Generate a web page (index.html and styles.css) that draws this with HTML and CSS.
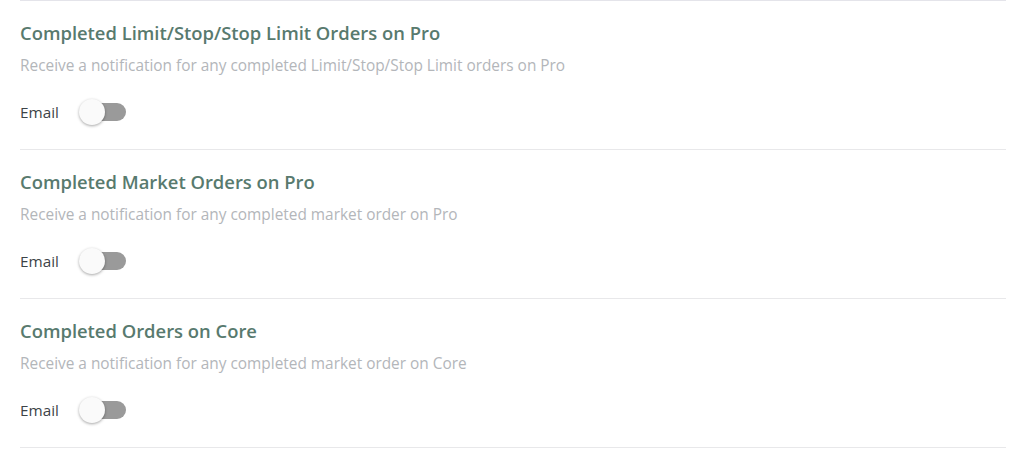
FILE: index.html
```html
<!DOCTYPE html>
<html lang="en">
<head>
    <meta charset="UTF-8">
    <meta name="viewport" content="width=device-width, initial-scale=1.0">
    <title>Notifications</title>
    <link rel="stylesheet" href="styles.css">
</head>
<body>

    <div class="settings">
        <div class="setting">
            <h3 class="setting-title">Completed Limit/Stop/Stop Limit Orders on Pro</h3>
            <p class="setting-desc">Receive a notification for any completed Limit/Stop/Stop Limit orders on Pro</p>
            <div class="setting-row">
                <span class="setting-label">Email</span>
                <span class="toggle"><span class="toggle-knob"></span></span>
            </div>
        </div>

        <div class="setting">
            <h3 class="setting-title">Completed Market Orders on Pro</h3>
            <p class="setting-desc">Receive a notification for any completed market order on Pro</p>
            <div class="setting-row">
                <span class="setting-label">Email</span>
                <span class="toggle"><span class="toggle-knob"></span></span>
            </div>
        </div>

        <div class="setting">
            <h3 class="setting-title">Completed Orders on Core</h3>
            <p class="setting-desc">Receive a notification for any completed market order on Core</p>
            <div class="setting-row">
                <span class="setting-label">Email</span>
                <span class="toggle"><span class="toggle-knob"></span></span>
            </div>
        </div>
    </div>

</body>
</html>
```

FILE: styles.css
```css
body {
    margin: 0;
    padding: 0;
    font-family: "Open Sans", Arial, sans-serif;
    background-color: #ffffff;
}

.settings {
    margin: 0 18px 0 20px;
    border-top: 1px solid #e4e4ea;
}

.setting {
    padding: 20px 0 23px;
    border-bottom: 1px solid #e8e8ea;
}

.setting-title {
    margin: 0;
    font-size: 18.4px;
    font-weight: 600;
    line-height: 24px;
    color: #587a6e;
}

.setting-desc {
    margin: 11px 0 0;
    font-size: 15.4px;
    line-height: 20px;
    color: #b3b6ba;
}

.setting-row {
    display: flex;
    align-items: center;
    gap: 21px;
    height: 28px;
    margin-top: 22px;
}

.setting-label {
    font-size: 15.3px;
    color: #3d4347;
}

/* off-state switch */
.toggle {
    position: relative;
    display: inline-block;
    width: 40px;
    height: 18px;
    margin-left: 6px;
    border-radius: 9px;
    background-color: #9a9a9a;
}

.toggle-knob {
    position: absolute;
    left: -7px;
    top: -4px;
    width: 26px;
    height: 26px;
    border-radius: 50%;
    background-color: #fafafa;
    box-shadow: 0 1px 3px rgba(0, 0, 0, 0.35);
}
```
